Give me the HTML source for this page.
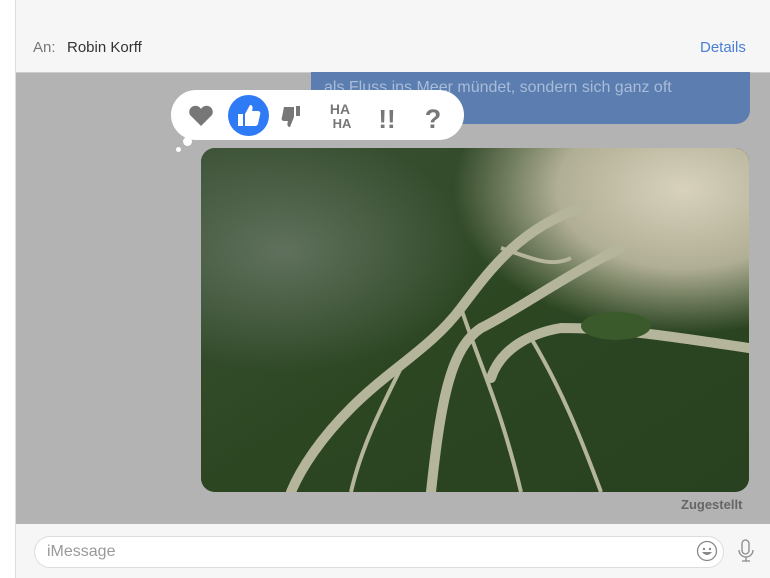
<!DOCTYPE html><html><head><style>
body{margin:0;width:770px;height:578px;overflow:hidden;background:#f6f6f6;font-family:"Liberation Sans",sans-serif;position:relative}
.a{position:absolute}
</style></head><body>
<div class="a" style="left:0;top:0;width:15px;height:578px;background:#fff;border-right:1px solid #ddd"></div>
<div class="a" style="left:33px;top:39px;font-size:15px;color:#777">An:</div>
<div class="a" style="left:67px;top:39px;font-size:15px;color:#333">Robin Korff</div>
<div class="a" style="left:700px;top:39px;font-size:15px;color:#4a7fd6">Details</div>
<div class="a" style="left:16px;top:72px;width:754px;height:451px;background:#b3b3b3;border-top:1px solid #ccc"></div>
<div class="a" style="left:311px;top:72px;width:439px;height:52px;background:#5b7db0;border-radius:0 0 14px 14px"></div>
<div class="a" style="left:324px;top:79px;font-size:16px;color:#a9bcd8">als Fluss ins Meer mündet, sondern sich ganz oft</div>
<div class="a" style="left:201px;top:148px;width:548px;height:344px;border-radius:14px;overflow:hidden;background:#2e4a25">
<svg width="548" height="344" viewBox="0 0 548 344">
<defs><radialGradient id="g" cx="0.88" cy="0.12" r="0.42"><stop offset="0" stop-color="#d8d2bd"/><stop offset="0.55" stop-color="#b0ae94"/><stop offset="1" stop-color="#a9ab8e" stop-opacity="0"/></radialGradient>
<radialGradient id="c" cx="0.15" cy="0.3" r="0.35"><stop offset="0" stop-color="#6a7a68" stop-opacity="0.8"/><stop offset="1" stop-color="#6a7a68" stop-opacity="0"/></radialGradient>
<linearGradient id="l" x1="0" y1="0" x2="1" y2="1"><stop offset="0" stop-color="#3c5236"/><stop offset="0.5" stop-color="#2c4622"/><stop offset="1" stop-color="#284120"/></linearGradient></defs>
<rect width="548" height="344" fill="url(#l)"/>
<rect width="548" height="344" fill="url(#c)"/>
<rect width="548" height="344" fill="url(#g)"/>
<g fill="none" stroke="#b5b59c" stroke-width="10" stroke-linecap="round">
<path d="M380 60 C320 80 290 120 260 160 C230 200 190 220 150 260 C120 290 100 320 90 344"/>
<path d="M420 100 C360 130 320 160 280 180 C250 200 240 250 230 344"/>
<path d="M548 200 C480 190 420 180 360 180 C330 185 300 200 290 230"/>
</g>
<g fill="none" stroke="#b5b59c" stroke-width="4">
<path d="M260 160 C280 220 300 260 320 344"/><path d="M200 220 C180 260 160 300 150 344"/><path d="M300 100 C330 110 350 120 370 110"/><path d="M330 190 C360 240 380 290 400 344"/>
</g>
<ellipse cx="415" cy="178" rx="35" ry="14" fill="#3a5a2c"/>
</svg></div>
<div class="a" style="left:681px;top:497px;font-size:13px;font-weight:bold;color:#666">Zugestellt</div>
<div class="a" style="left:171px;top:90px;width:293px;height:50px;background:#fff;border-radius:25px"></div>
<div class="a" style="left:183px;top:137px;width:9px;height:9px;background:#fff;border-radius:50%"></div>
<div class="a" style="left:176px;top:147px;width:5px;height:5px;background:#fff;border-radius:50%"></div>
<div class="a" style="left:228px;top:95px;width:41px;height:41px;background:#2f7bf5;border-radius:50%"></div>
<svg class="a" style="left:0;top:0" width="770" height="578">
<path d="M201 126 l-11-11 a6 6 0 0 1 11-6 a6 6 0 0 1 11 6z" fill="#777"/>
<path d="M238 114 h5 v12 h-5z M245 114 l5-9 c3 0 3 3 2 6 h6 c2 0 3 2 2 4 l-2 9 c-1 2-2 2-4 2 h-9z" fill="#fff"/>
<path d="M284 107 h10 v10 l-4 10 c-3 0-3-3-2-6 h-4 c-2 0-3-2-2-4z M296 106 h4 v10 h-4z" fill="#777"/>
<text x="340" y="114" font-size="14" font-weight="bold" fill="#777" text-anchor="middle" font-family="Liberation Sans">HA</text>
<text x="342" y="128" font-size="13" font-weight="bold" fill="#777" text-anchor="middle" font-family="Liberation Sans">HA</text>
<text x="387" y="128" font-size="26" font-weight="bold" fill="#777" text-anchor="middle" font-family="Liberation Sans">!!</text>
<text x="433" y="128" font-size="27" font-weight="bold" fill="#777" text-anchor="middle" font-family="Liberation Sans">?</text>
</svg>
<div class="a" style="left:16px;top:524px;width:754px;height:54px;background:#f6f6f6"></div>
<div class="a" style="left:34px;top:536px;width:688px;height:30px;background:#fff;border:1px solid #ddd;border-radius:16px"></div>
<div class="a" style="left:47px;top:543px;font-size:16px;color:#999">iMessage</div>
<svg class="a" style="left:696px;top:540px" width="22" height="22"><circle cx="11" cy="11" r="9.5" fill="none" stroke="#888" stroke-width="1.3"/><circle cx="8" cy="9" r="1.2" fill="#888"/><circle cx="14" cy="9" r="1.2" fill="#888"/><path d="M6 12 q5 6 10 0z" fill="#888"/></svg>
<svg class="a" style="left:737px;top:538px" width="18" height="26"><rect x="5" y="2" width="7" height="14" rx="3.5" fill="none" stroke="#888" stroke-width="1.3"/><path d="M2 12 a7 7 0 0 0 14 0 M9 19 v4 M5 23 h8" fill="none" stroke="#888" stroke-width="1.3"/></svg>
</body></html>
